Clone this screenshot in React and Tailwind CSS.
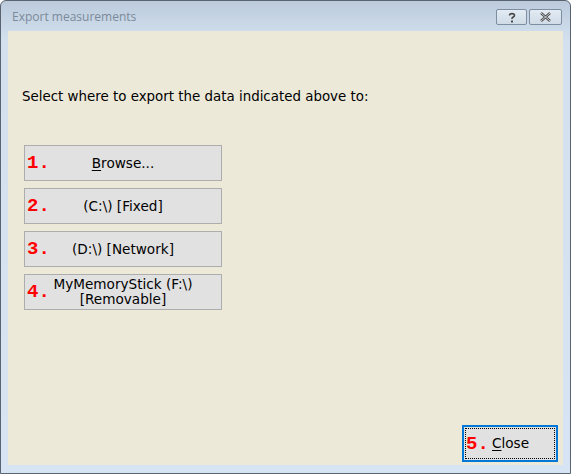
import React from "react";

function Num({ n }) {
  return (
    <span className="absolute left-[2px] top-1/2 -translate-y-1/2 font-['Liberation_Mono',monospace] font-bold text-[19px] leading-none text-[#ff0000]">
      {n}.
    </span>
  );
}

function Btn({ n, children }) {
  return (
    <div className="relative flex h-[36px] w-[198px] items-center justify-center border border-[#adadad] bg-[#e1e1e1] text-center text-[13.6px] leading-[15px] text-black">
      <Num n={n} />
      <div>{children}</div>
    </div>
  );
}

export default function App() {
  return (
    <div className="flex h-[474px] w-[571px] flex-col overflow-hidden rounded-t-[6px] border border-[#5a6470] bg-[linear-gradient(to_bottom,#bccbdc_0px,#d3e1ef_40px,#d6e4f3_100%)] font-['DejaVu_Sans',sans-serif]">
      <div className="flex h-[30px] shrink-0 items-center justify-between pl-[11px] pr-[8px] pt-[2px]">
        <span className="font-['Open_Sans',sans-serif] text-[12px] text-[#7b8a99]">Export measurements</span>
        <div className="flex gap-[2px]">
          <div className="flex h-[16px] w-[31px] items-center justify-center rounded-[2px] border border-[#7d8ea0] bg-[linear-gradient(to_bottom,#e3ebf3,#cfdbe7)]">
            <svg width="10" height="11" viewBox="0 0 10 11">
              <path d="M2.5 3.5 C2.5 1 7.5 1 7.5 3.5 C7.5 5 5 5 5 6.5 L5 7" fill="none" stroke="#4a4a4a" strokeWidth="1.6" />
              <rect x="4" y="8.5" width="2" height="2" fill="#4a4a4a" />
            </svg>
          </div>
          <div className="flex h-[16px] w-[33px] items-center justify-center rounded-[2px] border border-[#7d8ea0] bg-[linear-gradient(to_bottom,#e3ebf3,#cfdbe7)]">
            <svg width="13" height="10" viewBox="0 0 13 10">
              <path d="M2 1 L11 9 M11 1 L2 9" stroke="#4a4a4a" strokeWidth="2.4" />
              <path d="M2 1 L11 9 M11 1 L2 9" stroke="#e8eef4" strokeWidth="0.8" />
            </svg>
          </div>
        </div>
      </div>
      <div className="mx-[7px] flex h-[434px] flex-col bg-[#ece9d8]">
        <div className="ml-[14px] mt-[58px] text-[13.4px] leading-[16px] text-black">
          Select where to export the data indicated above to:
        </div>
        <div className="ml-[16px] mt-[40px] flex flex-col gap-[7px]">
          <Btn n="1">
            <span className="underline underline-offset-2">B</span>rowse...
          </Btn>
          <Btn n="2">(C:\) [Fixed]</Btn>
          <Btn n="3">(D:\) [Network]</Btn>
          <Btn n="4">
            MyMemoryStick (F:\)
            <br />
            [Removable]
          </Btn>
        </div>
        <div className="mt-auto mb-[3px] mr-[5px] flex justify-end">
          <div className="relative flex h-[37px] w-[96px] items-center justify-center border-2 border-[#0078d7] bg-[#e1e1e1] text-[13.6px] text-black">
            <div className="absolute inset-[1px] border border-dotted border-black" />
            <Num n="5" />
            <span className="pl-[1px]">
              <span className="underline underline-offset-2">C</span>lose
            </span>
          </div>
        </div>
      </div>
    </div>
  );
}
